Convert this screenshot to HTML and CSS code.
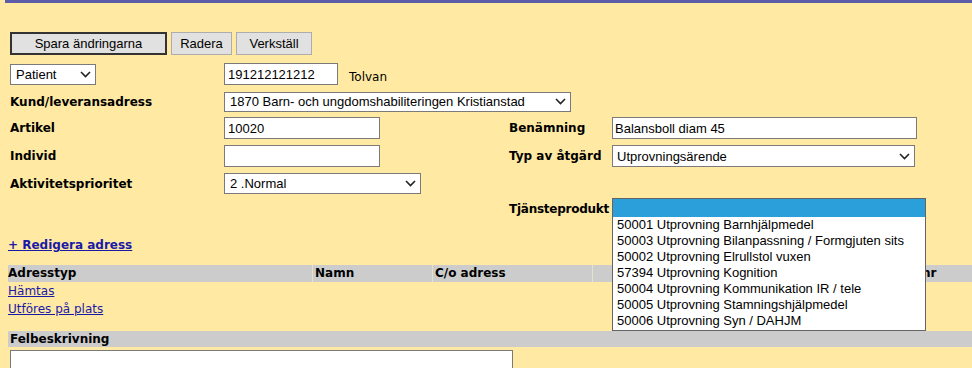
FILE: index.html
```html
<!DOCTYPE html>
<html>
<head lang="sv">
    <meta charset="UTF-8">
    <title>Ärende</title>
    <link rel="stylesheet" href="styles.css">
</head>
<body>
<div class="topbar"></div>
<div class="page">
    <div class="toolbar">
        <button class="btn btn_save">Spara ändringarna</button>
        <button class="btn btn_del">Radera</button>
        <button class="btn btn_run">Verkställ</button>
    </div>

    <div class="form">
        <div class="row row1">
            <div class="cell">
                <div class="select sel_patient"><span>Patient</span>
                    <svg class="chev" width="11" height="7" viewBox="0 0 11 7"><path d="M1 1L5.5 5.5L10 1" fill="none" stroke="#222" stroke-width="1.6"/></svg>
                </div>
            </div>
            <div class="cell wide">
                <input class="input in_pnr" type="text" value="191212121212"/>
                <span class="pname">Tolvan</span>
            </div>
        </div>

        <div class="row row2">
            <div class="cell label">Kund/leveransadress</div>
            <div class="cell wide">
                <div class="select sel_kund"><span>1870 Barn- och ungdomshabiliteringen Kristianstad</span>
                    <svg class="chev" width="11" height="7" viewBox="0 0 11 7"><path d="M1 1L5.5 5.5L10 1" fill="none" stroke="#222" stroke-width="1.6"/></svg>
                </div>
            </div>
        </div>

        <div class="row row3">
            <div class="cell label">Artikel</div>
            <div class="cell"><input class="input in_short" type="text" value="10020"/></div>
            <div class="cell label">Benämning</div>
            <div class="cell"><input class="input in_long" type="text" value="Balansboll diam 45"/></div>
        </div>

        <div class="row row4">
            <div class="cell label">Individ</div>
            <div class="cell"><input class="input in_short" type="text" value=""/></div>
            <div class="cell label">Typ av åtgärd</div>
            <div class="cell">
                <div class="select sel_typ"><span>Utprovningsärende</span>
                    <svg class="chev" width="11" height="7" viewBox="0 0 11 7"><path d="M1 1L5.5 5.5L10 1" fill="none" stroke="#222" stroke-width="1.6"/></svg>
                </div>
            </div>
        </div>

        <div class="row row5">
            <div class="cell label">Aktivitetsprioritet</div>
            <div class="cell">
                <div class="select sel_prio"><span>2 .Normal</span>
                    <svg class="chev" width="11" height="7" viewBox="0 0 11 7"><path d="M1 1L5.5 5.5L10 1" fill="none" stroke="#222" stroke-width="1.6"/></svg>
                </div>
            </div>
        </div>

        <div class="row row6">
            <div class="cell"></div>
            <div class="cell"></div>
            <div class="cell label tjanst">Tjänsteprodukt</div>
            <div class="cell dropcell">
                <!-- öppen lista -->
                <ul class="listbox">
                    <li class="selected">&nbsp;</li>
                    <li>50001 Utprovning Barnhjälpmedel</li>
                    <li>50003 Utprovning Bilanpassning / Formgjuten sits</li>
                    <li>50002 Utprovning Elrullstol vuxen</li>
                    <li>57394 Utprovning Kognition</li>
                    <li>50004 Utprovning Kommunikation IR / tele</li>
                    <li>50005 Utprovning Stamningshjälpmedel</li>
                    <li>50006 Utprovning Syn / DAHJM</li>
                </ul>
            </div>
        </div>
    </div>

    <a class="edit_link" href="#">+ Redigera adress</a>

    <div class="addr">
        <div class="addr_head">
            <div class="th th_typ">Adresstyp</div>
            <div class="th th_namn">Namn</div>
            <div class="th th_co">C/o adress</div>
            <div class="th th_adr"></div>
            <div class="th th_nr">Postnr</div>
        </div>
        <div class="addr_row"><a href="#">Hämtas</a></div>
        <div class="addr_row"><a href="#">Utföres på plats</a></div>
    </div>

    <div class="section_head">Felbeskrivning</div>
    <textarea class="fel"></textarea>
</div>
</body>
</html>
```

FILE: styles.css
```css
* {
    margin: 0;
    padding: 0;
    box-sizing: border-box;
}
body {
    background-color: #ffe9a3;
    font-family: "DejaVu Sans", Verdana, sans-serif;
    font-size: 12px;
    color: #000;
    overflow: hidden;
}

.topbar {
    height: 3px;
    margin-left: 5px;
    background-color: #5c5ca8;
}

.page {
    padding: 29px 0 0 8px;
}

/* knappar */
.toolbar {
    display: flex;
    gap: 4px;
    padding-left: 2px;
}
.btn {
    height: 23px;
    font-family: "Liberation Sans", Arial, sans-serif;
    font-size: 13px;
    background-color: #e1e1e1;
    border: 1px solid #adadad;
    color: #000;
}
.btn_save {
    width: 157px;
    border: 2px solid #333;
}
.btn_del {
    width: 61px;
}
.btn_run {
    width: 76px;
}

/* formulär */
.form {
    margin-top: 8px;
}
.row {
    display: grid;
    grid-template-columns: 214px 285px 103px 1fr;
    align-items: center;
}
.row1 { height: 22px; }
.row2 { height: 21px; margin-top: 6px; }
.row3 { height: 22px; margin-top: 5px; }
.row4 { height: 22px; margin-top: 6px; }
.row5 { height: 21px; margin-top: 6px; }
.row6 { height: 18px; margin-top: 4px; align-items: start; }

.cell {
    padding-left: 2px;
    display: flex;
    align-items: center;
}
.wide {
    grid-column: 2 / 5;
}
.label {
    font-weight: bold;
}
.tjanst {
    padding-top: 4px;
    letter-spacing: -0.25px;
    white-space: nowrap;
}

.input {
    height: 22px;
    border: 1px solid #7a7a7a;
    background-color: #fff;
    font-family: "Liberation Sans", Arial, sans-serif;
    font-size: 13px;
    padding: 0 3px;
    outline: none;
    color: #000;
}
.in_pnr { width: 114px; }
.in_short { width: 156px; }
.in_long { width: 305px; padding-left: 2px; }

.pname {
    margin-left: 11px;
    padding-top: 5px;
}

.select {
    height: 21px;
    border: 1px solid #7a7a7a;
    background-color: #fff;
    display: flex;
    align-items: center;
    justify-content: space-between;
    padding: 0 4px 0 5px;
    font-family: "Liberation Sans", Arial, sans-serif;
    font-size: 13px;
}
.sel_patient { width: 86px; }
.sel_kund { width: 347px; height: 20px; }
.sel_typ { width: 303px; height: 22px; padding-left: 4px; }
.sel_prio { width: 197px; }

/* öppen rullgardin */
.dropcell {
    position: relative;
    height: 18px;
}
.listbox {
    position: absolute;
    left: 2px;
    top: 0;
    width: 314px;
    list-style: none;
    background-color: #fff;
    border: 1px solid #646464;
    padding-bottom: 1px;
    font-family: "Liberation Sans", Arial, sans-serif;
    font-size: 13px;
    z-index: 5;
}
.listbox li {
    height: 16px;
    line-height: 16px;
    padding-left: 4px;
    white-space: nowrap;
}
.listbox li.selected {
    height: 18px;
    background-color: #2a9fd9;
}

/* adresser */
.edit_link {
    display: block;
    margin-top: 21px;
    width: max-content;
    line-height: 16px;
    font-weight: bold;
    color: #1a1aa8;
}

.addr {
    margin-top: 12px;
}
.addr_head {
    display: flex;
    height: 17px;
    background-color: #ccc;
    font-weight: bold;
    line-height: 17px;
}
.th {
    border-right: 1px solid #e6e2c8;
    white-space: nowrap;
    overflow: hidden;
}
.th_typ { width: 305px; }
.th_namn { width: 120px; padding-left: 2px; }
.th_co { width: 160px; padding-left: 2px; }
.th_adr { width: 297px; padding-left: 2px; }
.th_nr { flex: 1; padding-left: 2px; border-right: none; }

.addr_row {
    height: 18px;
    line-height: 18px;
}
.addr_row a {
    color: #1a1aa8;
}

.section_head {
    margin-top: 13px;
    height: 16px;
    line-height: 16px;
    background-color: #ccc;
    font-weight: bold;
    padding-left: 2px;
}

.fel {
    display: block;
    margin: 3px 0 0 2px;
    width: 503px;
    height: 60px;
    border: 1px solid #7a7a7a;
    background-color: #fff;
    resize: none;
}
```
